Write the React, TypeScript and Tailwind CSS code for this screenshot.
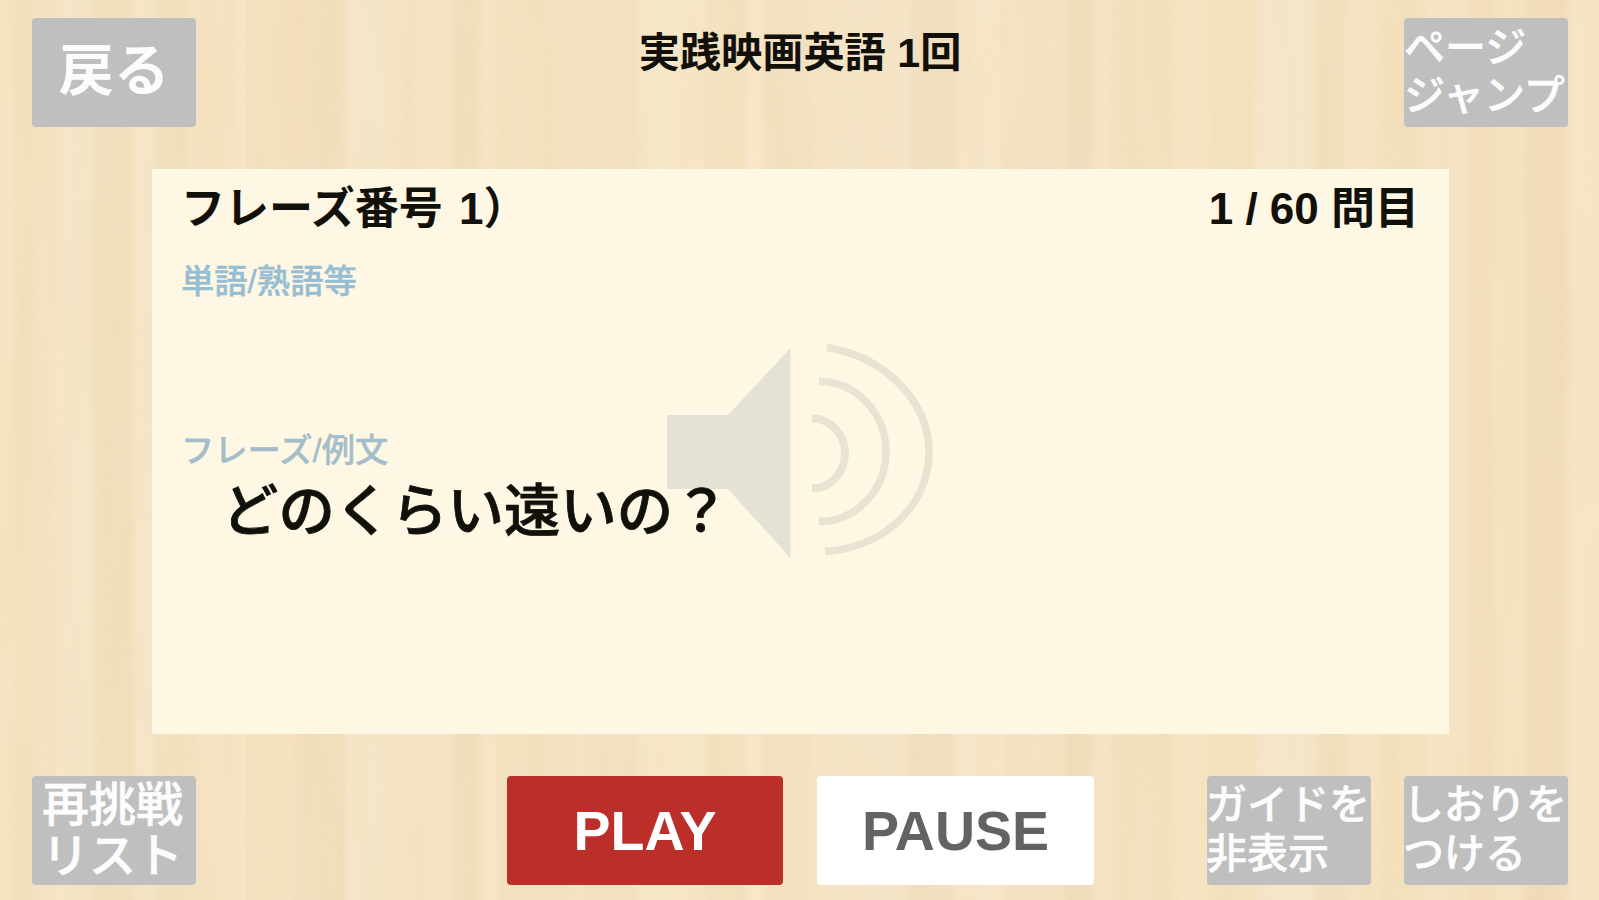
import type { ReactNode } from "react";

const GRAIN: [number, string][] = [
  [0, "#f6e3c0"], [19, "#efdfb9"], [35, "#f4e0be"], [60, "#f5e6c8"], [98, "#efddb8"],
  [138, "#f5e6c8"], [160, "#f0dfb9"], [190, "#f4e2bf"], [240, "#f6e6c6"], [247, "#f2e0bb"],
  [275, "#f4dfbb"], [300, "#f1dbb7"], [350, "#f5e6c9"], [385, "#f4e3c3"], [460, "#efdcb8"],
  [485, "#f6e6c6"], [500, "#f3dfbb"], [558, "#f3e2c1"], [590, "#f3dfbf"], [643, "#f6e7c9"],
  [710, "#f0e0bb"], [750, "#f8e7ca"], [766, "#f2dfbd"], [815, "#f5e4c3"], [840, "#f4e5c7"],
  [915, "#f1dcba"], [960, "#f6e6c9"], [1005, "#f5e1c0"], [1070, "#efdab6"], [1098, "#f6e5c3"],
  [1114, "#f1dfba"], [1178, "#f6e3c0"], [1215, "#f3dfba"], [1260, "#f5e6ca"], [1320, "#f1ddb9"],
  [1350, "#f4e3c0"], [1385, "#f2dfba"], [1430, "#f4e4c3"], [1472, "#f3ddb9"], [1500, "#f4e2be"],
  [1530, "#f0dab6"], [1573, "#f6e5c5"],
];

function Wood() {
  return (
    <svg
      className="absolute inset-0 -z-10 h-full w-full"
      viewBox="0 0 1599 900"
      preserveAspectRatio="none"
      aria-hidden="true"
    >
      <defs>
        <linearGradient id="grain" x1="0" x2="1599" y1="0" y2="0" gradientUnits="userSpaceOnUse">
          {GRAIN.flatMap(([x, color], i) => {
            const next = i + 1 < GRAIN.length ? GRAIN[i + 1][0] : 1599;
            const end = next - Math.min(9, (next - x) * 0.4);
            return [
              <stop key={`${x}a`} offset={x / 1599} stopColor={color} />,
              <stop key={`${x}b`} offset={end / 1599} stopColor={color} />,
            ];
          })}
        </linearGradient>
        <filter id="fibre" x="0" y="0" width="100%" height="100%" colorInterpolationFilters="sRGB">
          <feTurbulence type="fractalNoise" baseFrequency="0.04 0.004" numOctaves="2" seed="7" />
          <feColorMatrix values="0 0 0 0 0.91  0 0 0 0 0.78  0 0 0 0 0.58  2.4 0 0 0 -0.95" />
        </filter>
      </defs>
      <rect width="1599" height="900" fill="url(#grain)" />
      <rect width="1599" height="900" fill="#f7e7cb" opacity="0.25" />
      <rect width="1599" height="900" filter="url(#fibre)" opacity="0.1" />
    </svg>
  );
}

function GrayButton({ children, className = "" }: { children: ReactNode; className?: string }) {
  return (
    <button
      className={`flex h-[109px] w-[164px] shrink-0 flex-col rounded-[4px] bg-[#bfbfc0] whitespace-nowrap text-[#fcfcfc] ${className}`}
    >
      {children}
    </button>
  );
}

function Speaker() {
  return (
    <svg
      className="absolute top-[169px] left-[505px] h-[230px] w-[280px]"
      viewBox="657 338 280 230"
      fill="none"
      aria-hidden="true"
    >
      <path d="M667 415H728L790.5 348V558L728 489H667Z" fill="#e4e2d5" />
      <g stroke="#e9e3d1">
        <path d="M812 418.500A33 35 0 0 1 812 488.500" strokeWidth="8" />
        <path d="M819 381.500A67 70 0 0 1 819 521.500" strokeWidth="7.500" />
        <path d="M827 347.500C886 357 929 402 929 452C929 506 883 548 825 551.500" strokeWidth="7.500" />
      </g>
    </svg>
  );
}

export default function App() {
  return (
    <main className="relative isolate flex h-[900px] w-[1599px] flex-col overflow-hidden font-['Liberation_Sans','Noto_Sans_CJK_JP',sans-serif] text-[#12100a]">
      <Wood />
      <header className="flex items-start justify-between pt-[18px] pr-[31px] pl-8">
        <GrayButton className="items-center pt-[23px] text-[55.5px] leading-[60px] font-bold">戻る</GrayButton>
        <h1 className="pt-[10px] text-[41.2px] leading-[50px] font-bold">実践映画英語 1回</h1>
        <GrayButton className="items-start pt-[6px] text-[41px] leading-[48px] font-medium [-webkit-text-stroke:0.5px]">
          <span>ページ</span>
          <span>ジャンプ</span>
        </GrayButton>
      </header>

      <section className="relative mt-[42px] ml-[152px] h-[565px] w-[1297px] bg-[#fef7e3] pr-[30px] pl-[29px]">
        <Speaker />
        <div className="relative flex h-[80px] items-center justify-between text-[44px] font-bold">
          <span className="[word-spacing:4px]">フレーズ番号 1）</span>
          <span>1 / 60 問目</span>
        </div>
        <div className="relative">
          <h2 className="h-[169px] pt-[13px] text-[33.3px] leading-[40px] font-medium text-[#97bdd3] [-webkit-text-stroke:0.4px]">
            単語/熟語等
          </h2>
          <h2 className="pt-[13px] text-[33.3px] leading-[40px] font-medium text-[#a3bdca] [-webkit-text-stroke:0.4px]">
            フレーズ/例文
          </h2>
          <p className="pt-[6px] pl-[41px] text-[56.4px] leading-[70px] font-medium [-webkit-text-stroke:0.8px]">
            どのくらい遠いの？
          </p>
        </div>
      </section>

      <footer className="mt-[42px] flex pr-[31px] pl-8">
        <GrayButton className="items-center pt-[3px] pr-[3px] text-[47px] leading-[51px] font-medium [-webkit-text-stroke:0.6px]">
          <span>再挑戦</span>
          <span>リスト</span>
        </GrayButton>
        <button className="ml-[311px] h-[109px] w-[276px] rounded-[4px] bg-[#bb2e29] pt-[2px] text-[55.5px] font-bold text-white">
          PLAY
        </button>
        <button className="ml-[34px] h-[109px] w-[277px] rounded-[4px] bg-white pt-[2px] text-[55.5px] font-bold text-[#636363]">
          PAUSE
        </button>
        <GrayButton className="ml-auto items-start pt-[5px] text-[41px] leading-[49px] font-medium [-webkit-text-stroke:0.5px]">
          <span className="-ml-px">ガイドを</span>
          <span className="-ml-px">非表示</span>
        </GrayButton>
        <GrayButton className="ml-[33px] items-start pt-[5px] text-[41px] leading-[49px] font-medium [-webkit-text-stroke:0.5px]">
          <span className="-ml-px">しおりを</span>
          <span className="-ml-px">つける</span>
        </GrayButton>
      </footer>
    </main>
  );
}
